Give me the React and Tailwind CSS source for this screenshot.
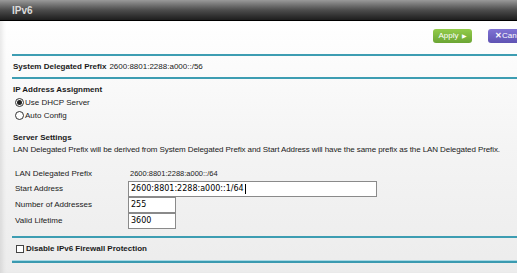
const font = { fontFamily: '"Liberation Sans", Arial, sans-serif' };

function Radio({ checked, label }) {
	return (
		<div className="flex items-center h-[13px] pl-[3px]">
			<span className="w-[9px] h-[9px] rounded-full border border-[#333] bg-white flex items-center justify-center">
				{checked && <span className="w-[5px] h-[5px] rounded-full bg-[#222]" />}
			</span>
			<span className="ml-[1px]">{label}</span>
		</div>
	);
}

function Field({ value, width, caret }) {
	return (
		<div
			className={`${width} h-[16px] border border-[#8a8a8a] bg-white flex items-center pl-[2px] text-[8px] text-black`}
			style={{ fontFamily: '"DejaVu Sans", Tahoma, sans-serif' }}
		>
			{value}
			{caret && <span className="w-px h-[10px] bg-black ml-[1px]" />}
		</div>
	);
}

function Row({ label, children }) {
	return (
		<div className="flex items-center h-[16px]">
			<div className="w-[116px] pl-[3px] shrink-0">{label}</div>
			{children}
		</div>
	);
}

export default function App() {
	return (
		<div className="w-[517px] h-[273px] overflow-hidden flex flex-col text-[8px] text-[#1a1a1a]" style={font}>
			<div className="h-[21px] shrink-0 flex items-center pl-[12px] bg-gradient-to-b from-[#9a9a9a] via-[#4d4d4d] to-[#1e1e1e] border-b border-black">
				<h1 className="text-[10px] font-bold text-[#dcdcdc]">IPv6</h1>
			</div>
			<div className="flex-1 flex flex-col bg-gradient-to-b from-white via-[#f4f4f4] to-[#ececec] shadow-[inset_5px_0_5px_-3px_rgba(0,0,0,0.1)]">
				<div className="h-[33px] shrink-0 flex justify-end items-start pt-[8px] gap-[16px] mr-[-17px]">
					<button className="w-[39px] h-[14px] rounded-[3px] bg-gradient-to-b from-[#93cc4a] to-[#6ba534] text-white text-[8px] flex items-center justify-center gap-[3px]">
						Apply <span className="text-[6px]">▶</span>
					</button>
					<button className="w-[46px] h-[14px] rounded-[3px] bg-gradient-to-b from-[#8073d4] to-[#5f53b3] text-white text-[8px] flex items-center justify-center">
						<span className="font-bold">✕</span>Cancel
					</button>
				</div>
				<div className="ml-[12px] flex flex-col">
					<div className="h-[2px] bg-[#3d9db2]" />
					<div className="h-[21px] flex items-center pl-[1px]">
						<span className="font-bold">System Delegated Prefix</span>
						<span className="ml-[3px]">2600:8801:2288:a000::/56</span>
					</div>
					<div className="h-[2px] bg-[#3d9db2]" />
					<div className="pt-[4px] flex flex-col">
						<div className="h-[13px] flex items-center pl-[1px] font-bold">IP Address Assignment</div>
						<Radio checked label="Use DHCP Server" />
						<Radio label="Auto Config" />
					</div>
					<div className="mt-[9px] flex flex-col pl-[1px]">
						<div className="h-[13px] flex items-center font-bold">Server Settings</div>
						<div className="h-[12px] flex items-center whitespace-nowrap tracking-[-0.09px]">
							LAN Delegated Prefix will be derived from System Delegated Prefix and Start Address will have the same prefix as the LAN Delegated Prefix.
						</div>
					</div>
					<div className="mt-[11px] flex flex-col">
						<div className="flex items-center h-[14px]">
							<div className="w-[116px] pl-[3px] shrink-0">LAN Delegated Prefix</div>
							<span className="pl-[2px] text-[7.5px]">2600:8801:2288:a000::/64</span>
						</div>
						<Row label="Start Address">
							<Field value="2600:8801:2288:a000::1/64" width="w-[249px]" caret />
						</Row>
						<Row label="Number of Addresses">
							<Field value="255" width="w-[48px]" />
						</Row>
						<Row label="Valid Lifetime">
							<Field value="3600" width="w-[48px]" />
						</Row>
					</div>
					<div className="mt-[7px] h-[2px] bg-[#3d9db2]" />
					<div className="h-[22px] flex items-center pl-[4px]">
						<span className="w-[8px] h-[8px] border border-[#444] bg-white" />
						<span className="ml-[2px] font-bold">Disable IPv6 Firewall Protection</span>
					</div>
					<div className="h-[3px] bg-[#3a9ab0] border-t border-[#a6d8e4]" />
				</div>
			</div>
		</div>
	);
}
